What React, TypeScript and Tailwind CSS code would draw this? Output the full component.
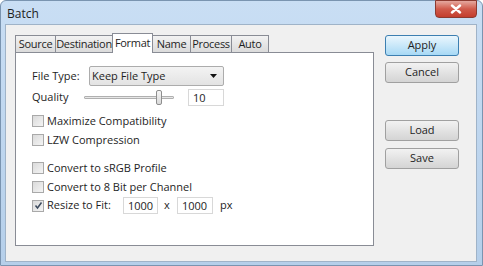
import { useState } from "react";

const tabs = [
  { name: "Source", w: "w-[41px]" },
  { name: "Destination", w: "w-[58px]" },
  { name: "Format", w: "w-[41px]" },
  { name: "Name", w: "w-[39px]" },
  { name: "Process", w: "w-[42px]" },
  { name: "Auto", w: "w-[38px]" },
];

function CheckBox({ checked, label, className }: { checked?: boolean; label: string; className?: string }) {
  return (
    <div className={"flex items-center h-[16px] " + (className ?? "")}>
      <div className="w-[12px] h-[12px] border border-[#a9a9a9] bg-gradient-to-br from-[#dadada] to-[#f4f4f4] flex items-center justify-center">
        {checked && (
          <svg width="9" height="9" viewBox="0 0 9 9">
            <path d="M1.5 4.5 L3.5 7 L7.5 1.5" fill="none" stroke="#3c4a5e" strokeWidth="1.5" />
          </svg>
        )}
      </div>
      <span className="ml-[3px]">{label}</span>
    </div>
  );
}

function Button({ label, primary }: { label: string; primary?: boolean }) {
  return (
    <button
      className={
        "w-[74px] h-[21px] rounded-[3px] border text-[11px] text-[#1e1e1e] " +
        (primary
          ? "border-[#3c7fb1] bg-gradient-to-b from-[#eaf6fd] to-[#a7d9f5]"
          : "border-[#a0a0a0] bg-gradient-to-b from-[#f2f2f2] to-[#d4d4d4]")
      }
    >
      {label}
    </button>
  );
}

export default function App() {
  const [quality] = useState(10);

  return (
    <div
      className="w-[483px] h-[266px] flex flex-col rounded-t-[6px] border border-[#7a94b0] bg-gradient-to-b from-[#c9def4] to-[#b5cfea] text-[11px] text-[#1e1e1e]"
      style={{ fontFamily: '"Open Sans", "Noto Sans", sans-serif' }}
    >
      {/* title bar */}
      <div className="h-[23px] flex items-start justify-between">
        <span className="ml-[6px] mt-[4px] text-[12px]">Batch</span>
        <div className="mr-[5px] mt-[-1px] w-[42px] h-[18px] rounded-b-[4px] border border-[#8c3a30] bg-gradient-to-b from-[#e4a89f] via-[#d05a4b] to-[#c33d2d] flex items-center justify-center">
          <svg width="12" height="10" viewBox="0 0 12 10">
            <path d="M2 1.5 L10 8.5 M10 1.5 L2 8.5" stroke="#fff" strokeWidth="2.4" strokeLinecap="round" />
          </svg>
        </div>
      </div>

      {/* client area */}
      <div className="ml-[4px] mr-[5px] mb-[3px] flex-1 flex bg-[#f0f0f0] border border-[#9fb3c8]">
        <div className="ml-[9px] mt-[8px] w-[359px] flex flex-col">
          <div className="h-[19px] flex items-end relative z-10 tracking-[-0.3px]">
            {tabs.map((t) =>
              t.name === "Format" ? (
                <div
                  key={t.name}
                  className={t.w + " h-[20px] mb-[-1px] -ml-px bg-white border border-b-0 border-[#898c95] flex items-start justify-center pt-[1px]"}
                >
                  {t.name}
                </div>
              ) : (
                <div
                  key={t.name}
                  className={t.w + " h-[17px] border border-b-0 border-[#898c95] -ml-px first:ml-0 bg-gradient-to-b from-[#f2f2f2] to-[#dbdbdb] flex items-center justify-center"}
                >
                  {t.name}
                </div>
              )
            )}
          </div>
          <div className="h-[194px] bg-white border border-[#898c95] pl-[16px] pt-[13px]">
            <div className="flex items-center h-[20px]">
              <span className="w-[57px]">File Type:</span>
              <div className="w-[135px] h-[20px] rounded-[2px] border border-[#acacac] bg-gradient-to-b from-[#f3f3f3] to-[#e3e3e3] flex items-center justify-between pl-[2px] pr-[6px]">
                <span>Keep File Type</span>
                <svg width="7" height="4" viewBox="0 0 7 4">
                  <path d="M0 0 L7 0 L3.5 4 Z" fill="#111" />
                </svg>
              </div>
            </div>
            <div className="flex items-center h-[17px] mt-[3px]">
              <span className="w-[52px]">Quality</span>
              <div className="relative w-[90px] h-[15px] flex items-center">
                <div className="w-full h-[3px] border border-[#b0b0b0] bg-[#e7e7e7] rounded-[1px]" />
                <div className="absolute left-[72px] top-0 w-[6px] h-[15px] rounded-[2px] border border-[#8e8e8e] bg-gradient-to-b from-[#f6f6f6] to-[#d9d9d9]" />
              </div>
              <div className="ml-[14px] w-[36px] h-[17px] border border-[#d8d8d8] bg-white pl-[4px] leading-[15px]">{quality}</div>
            </div>

            <CheckBox label="Maximize Compatibility" className="mt-[7px]" />
            <CheckBox label="LZW Compression" className="mt-[3px]" />
            <CheckBox label="Convert to sRGB Profile" className="mt-[12px]" />
            <CheckBox label="Convert to 8 Bit per Channel" className="mt-[3px]" />
            <div className="flex items-center mt-[2px] h-[17px]">
              <CheckBox checked label="Resize to Fit:" className="w-[91px]" />
              <div className="w-[35px] h-[17px] border border-[#d8d8d8] bg-white pl-[4px] leading-[15px]">1000</div>
              <span className="ml-[6px] w-[13px]">x</span>
              <div className="w-[36px] h-[17px] border border-[#d8d8d8] bg-white pl-[4px] leading-[15px]">1000</div>
              <span className="ml-[7px]">px</span>
            </div>
          </div>
        </div>

        <div className="ml-[11px] mt-[10px] flex flex-col">
          <Button label="Apply" primary />
          <div className="mt-[6px]">
            <Button label="Cancel" />
          </div>
          <div className="mt-[37px]">
            <Button label="Load" />
          </div>
          <div className="mt-[7px]">
            <Button label="Save" />
          </div>
        </div>
      </div>
    </div>
  );
}
